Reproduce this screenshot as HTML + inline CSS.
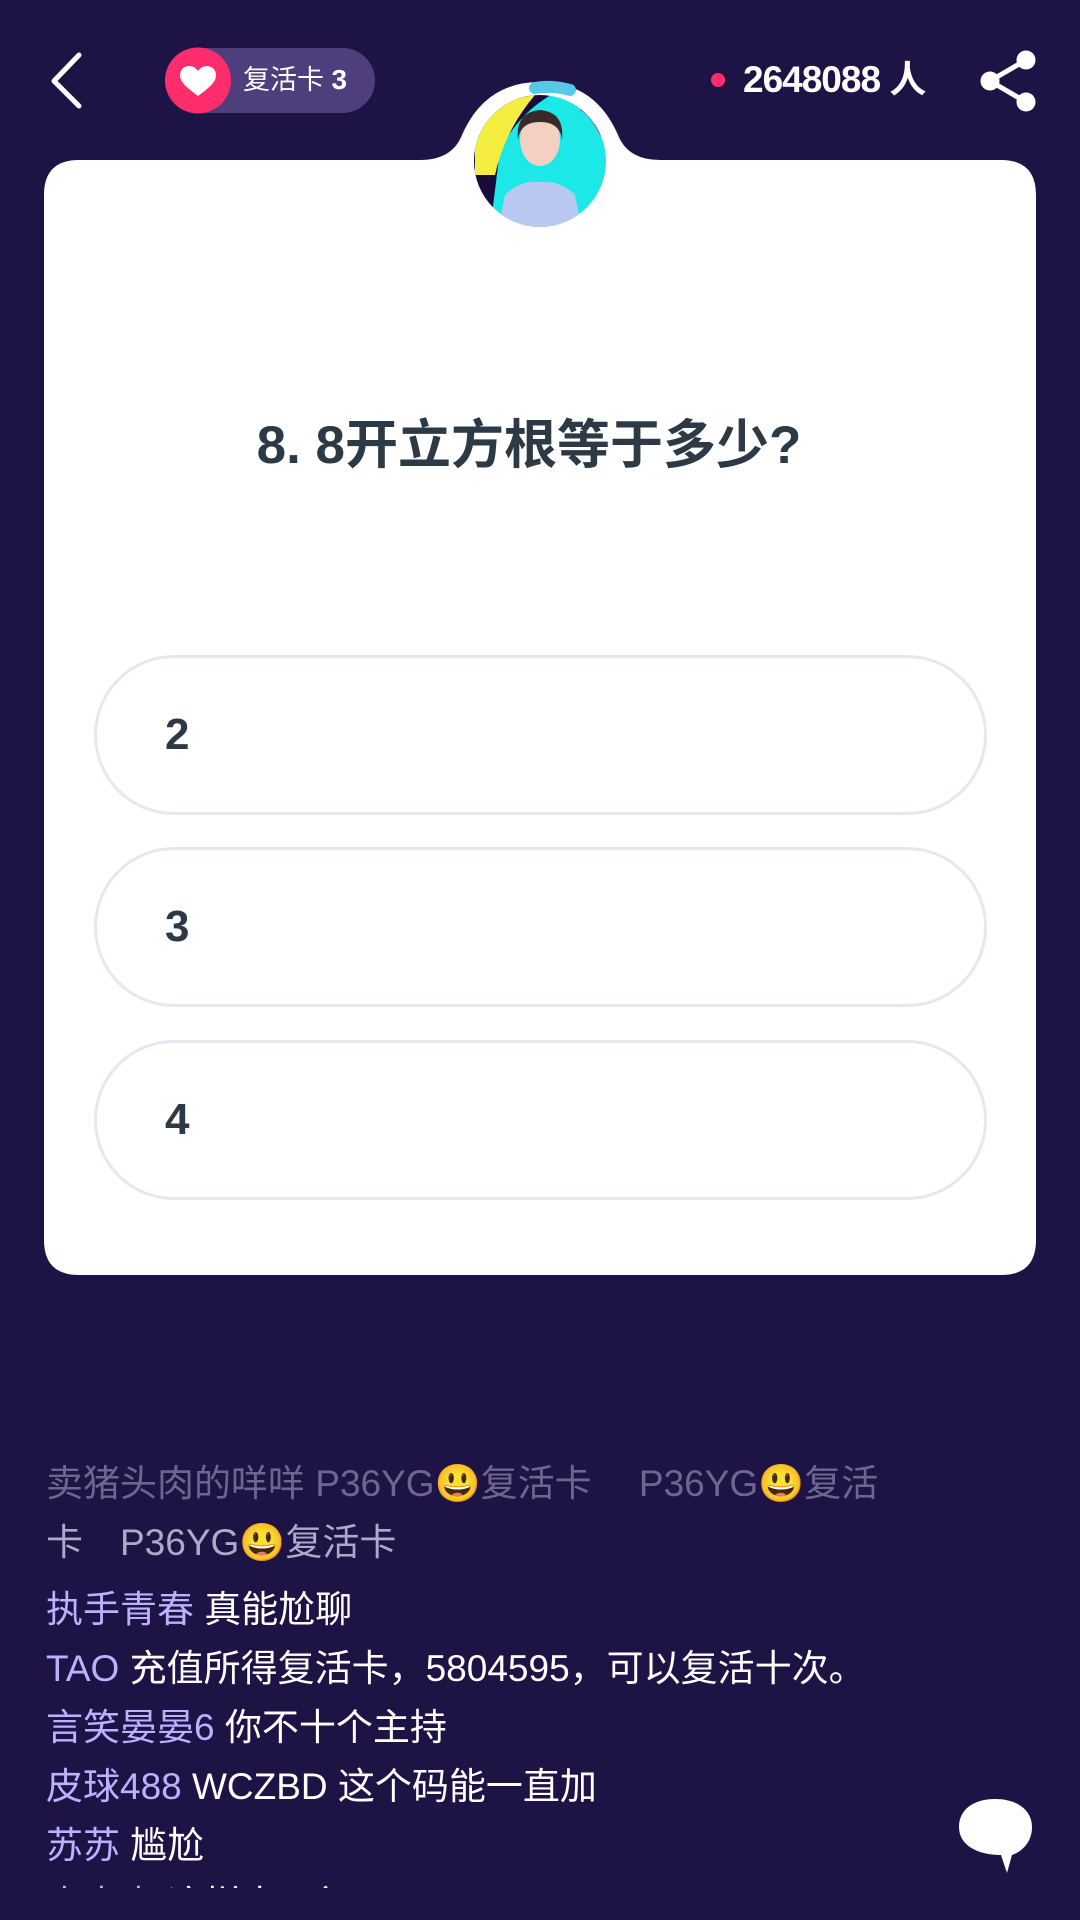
<!DOCTYPE html>
<html><head><meta charset="utf-8"><style>
*{margin:0;padding:0;box-sizing:border-box}
body{width:1080px;height:1920px;background:#1d1445;position:relative;overflow:hidden;font-family:"Liberation Sans","Noto Sans CJK SC",sans-serif}
.abs{position:absolute}
.opt{position:absolute;left:94px;width:893px;height:160px;border:3px solid #e6e8f0;border-radius:80px;background:#fff;font-weight:bold;font-size:44px;color:#2d3a45;line-height:154px;padding-left:68px}
.chat{position:absolute;left:46px;top:1454px;width:960px;height:434px;overflow:hidden;font-size:37px;line-height:59px;color:#fff;font-family:"Liberation Sans","Noto Sans CJK SC",sans-serif}
.n{color:#b9b2ff}
.fade{color:#6e6690}
</style></head><body>
<svg class="abs" style="left:0;top:0" width="1080" height="1300">
<path d="M79 55 L54 81 L79 106" fill="none" stroke="#fff" stroke-width="5" stroke-linecap="round" stroke-linejoin="round"/>
<rect x="165" y="48" width="210" height="65" rx="32.5" fill="#4e3f7c"/>
<circle cx="198" cy="80.5" r="33" fill="#ff2d6b"/>
<path d="M198 96 C186 87 180 82 180 75 C180 69 185 66 189 66 C193 66 196 68 198 71 C200 68 203 66 207 66 C211 66 216 69 216 75 C216 82 210 87 198 96Z" fill="#fff"/>
<circle cx="718" cy="80" r="7" fill="#ff2d6b"/>
<g fill="#fff" stroke="#fff" stroke-width="5"><line x1="1026" y1="60" x2="990" y2="81"/><line x1="990" y1="81" x2="1026" y2="102"/></g>
<circle cx="1026" cy="60" r="9.5" fill="#fff"/><circle cx="990" cy="81" r="9.5" fill="#fff"/><circle cx="1026" cy="102" r="9.5" fill="#fff"/>
<path d="M44 195 Q44 160 79 160 L420 160 Q452 160 462 135 Q485 82 540 82 Q595 82 618 135 Q628 160 660 160 L1001 160 Q1036 160 1036 195 L1036 1240 Q1036 1275 1001 1275 L79 1275 Q44 1275 44 1240Z" fill="#fff"/>
<defs><clipPath id="av"><circle cx="540" cy="161" r="66"/></clipPath></defs>
<g clip-path="url(#av)">
<rect x="470" y="90" width="140" height="140" fill="#1de8e8"/>
<path d="M470 90 L560 90 Q520 110 500 150 L490 230 L470 230Z" fill="#1a0b3a"/>
<path d="M475 120 Q500 100 535 95 Q505 130 495 175 L475 175Z" fill="#f4ee40"/>
<path d="M585 100 Q605 115 610 140 L600 135 Q590 115 580 110Z" fill="#e0206a"/>
<ellipse cx="540" cy="140" rx="20" ry="26" fill="#f3d0c2"/>
<path d="M518 140 Q515 112 540 110 Q565 112 562 140 Q560 122 540 122 Q520 122 518 140Z" fill="#3a2a2a"/>
<path d="M498 230 L505 195 Q520 180 540 182 Q560 180 575 195 L582 230Z" fill="#b8c8f0"/>
</g>
<path d="M535 88 A80 80 0 0 1 570 90" fill="none" stroke="#56c8e8" stroke-width="12" stroke-linecap="round"/>
</svg>
<div class="abs" style="left:243px;top:62px;font-size:27px;color:#fff;line-height:36px">复活卡 <b style="font-size:28px">3</b></div>
<div class="abs" style="left:743px;top:57px;font-size:37px;font-weight:bold;color:#fff;line-height:46px;letter-spacing:-1px">2648088 人</div>
<div class="abs" style="left:44px;width:970px;top:414px;text-align:center;font-size:53px;font-weight:bold;color:#2d3a45;line-height:64px">8. 8开立方根等于多少?</div>
<div class="opt" style="top:655px">2</div>
<div class="opt" style="top:847px">3</div>
<div class="opt" style="top:1040px">4</div>
<div class="chat">
<div class="fade">卖猪头肉的咩咩 P36YG😃复活卡　 P36YG😃复活</div>
<div class="fade" style="color:#b0a8c8">卡　P36YG😃复活卡</div>
<div style="margin-top:8px"><span class="n">执手青春</span> 真能尬聊</div>
<div><span class="n">TAO</span> 充值所得复活卡，5804595，可以复活十次。</div>
<div><span class="n">言笑晏晏6</span> 你不十个主持</div>
<div><span class="n">皮球488</span> WCZBD 这个码能一直加</div>
<div><span class="n">苏苏</span> 尴尬</div>
<div><span class="n">喜喜喜</span> 这样太不行</div>
</div>
<svg class="abs" style="left:955px;top:1795px" width="85" height="85">
<path d="M40 4 C62 4 77 15 77 32 C77 48 66 57 57 60 L52 78 L46 60 C22 60 4 50 4 32 C4 15 18 4 40 4Z" fill="#fff"/>
</svg>
</body></html>
